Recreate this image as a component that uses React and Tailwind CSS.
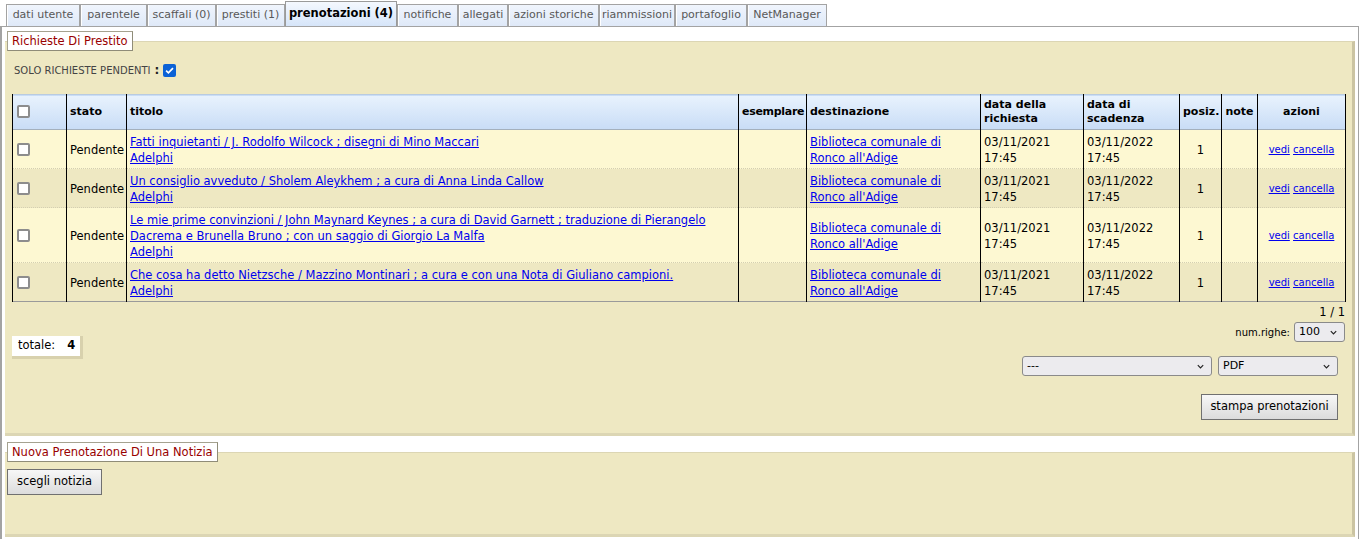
import React from "react";

const tabs = [
  { label: "dati utente", w: "w-[74px]" },
  { label: "parentele", w: "w-[67px]" },
  { label: "scaffali (0)", w: "w-[69px]" },
  { label: "prestiti (1)", w: "w-[69px]" },
  { label: "prenotazioni (4)", w: "w-[112px]", active: true },
  { label: "notifiche", w: "w-[61px]" },
  { label: "allegati", w: "w-[50px]" },
  { label: "azioni storiche", w: "w-[91px]" },
  { label: "riammissioni", w: "w-[76px]" },
  { label: "portafoglio", w: "w-[72px]" },
  { label: "NetManager", w: "w-[80px]" },
];

const rows = [
  {
    titolo: ["Fatti inquietanti / J. Rodolfo Wilcock ; disegni di Mino Maccari"],
  },
  {
    titolo: ["Un consiglio avveduto / Sholem Aleykhem ; a cura di Anna Linda Callow"],
  },
  {
    titolo: [
      "Le mie prime convinzioni / John Maynard Keynes ; a cura di David Garnett ; traduzione di Pierangelo",
      "Dacrema e Brunella Bruno ; con un saggio di Giorgio La Malfa",
    ],
  },
  {
    titolo: ["Che cosa ha detto Nietzsche / Mazzino Montinari ; a cura e con una Nota di Giuliano campioni."],
  },
];

function Box({ checked }) {
  if (checked) {
    return (
      <span className="inline-flex w-[13px] h-[13px] rounded-[2px] bg-[#0b62d6] items-center justify-center">
        <svg viewBox="0 0 12 12" className="w-[11px] h-[11px]">
          <path d="M2.3 6.2 L4.8 8.6 L9.8 3.4" fill="none" stroke="white" strokeWidth="1.8" />
        </svg>
      </span>
    );
  }
  return <span className="inline-block w-[13px] h-[13px] rounded-[2px] border-2 border-[#8d8d8d] bg-white" />;
}

function Chevron() {
  return (
    <svg viewBox="0 0 10 10" className="w-[9px] h-[9px]">
      <path d="M2 3.5 L5 6.5 L8 3.5" fill="none" stroke="#222" strokeWidth="1.3" />
    </svg>
  );
}

function Select({ value, w }) {
  return (
    <div className={`${w} h-[20px] flex items-center justify-between pl-[4px] pr-[6px] border border-[#8a8a8a] rounded-[3px] bg-[#ecebee] text-[11px]`}>
      <span>{value}</span>
      <Chevron />
    </div>
  );
}

function Legend({ children }) {
  return (
    <div className="relative z-10 ml-[2px] inline-block bg-white border border-[#a5a290] border-r-[#8f8c78] border-b-[#8f8c78] px-[4px] h-[20px] leading-[18px] text-[11.5px] text-[#990000]">
      {children}
    </div>
  );
}

const th = "border-x border-black px-[3px] font-bold align-middle";
const td = "border-x border-black px-[3px] align-middle";

export default function App() {
  return (
    <div className="w-[1360px] h-[539px] overflow-hidden bg-white text-black font-['DejaVu_Sans',sans-serif] text-[11px]">
      {/* tabs */}
      <div className="flex items-end pl-[6px] pt-[1px] h-[26px]">
        {tabs.map((t) =>
          t.active ? (
            <div
              key={t.label}
              className={`${t.w} h-[25px] flex items-center justify-center border border-b-0 border-[#9a9a9a] bg-gradient-to-b from-[#f4f8fe] to-[#d6e5f9] font-bold text-[11.5px] text-black`}
            >
              {t.label}
            </div>
          ) : (
            <div
              key={t.label}
              className={`${t.w} h-[22px] flex items-center justify-center border border-b-0 border-[#a3a3a3] bg-gradient-to-b from-[#f0f5fd] to-[#dfe9f8] text-[11px] text-[#585858] shadow-[inset_1px_0_0_#ffffff]`}
            >
              {t.label}
            </div>
          )
        )}
      </div>

      <div className="w-[1359px] h-[513px] border border-b-0 border-[#a3a3a3] border-l-2 pt-[4px] pl-[3px] pr-[3px]">
        {/* Richieste di prestito */}
        <Legend>Richieste Di Prestito</Legend>
        <div className="-mt-[10px] h-[395px] bg-[#eee8c2] border-t border-[#dcd6b4] border-r-[3px] border-r-[#cbc4a2] border-b-[3px] border-b-[#dcd6b4] pl-[7px] pr-[7px] pt-[18px]">
          <div className="flex items-center h-[20px] pl-[2px] text-[10px] text-[#444]">
            <span>SOLO RICHIESTE PENDENTI</span>
            <span className="ml-[4px] mr-[4px] font-bold text-[12px] text-[#222]">:</span>
            <Box checked />
          </div>

          <table className="mt-[14px] w-[1333px] table-fixed border-collapse border-b border-b-[#9a9a9a]">
            <colgroup>
              <col className="w-[54px]" />
              <col className="w-[60px]" />
              <col className="w-[612px]" />
              <col className="w-[68px]" />
              <col className="w-[174px]" />
              <col className="w-[103px]" />
              <col className="w-[96px]" />
              <col className="w-[42px]" />
              <col className="w-[36px]" />
              <col className="w-[88px]" />
            </colgroup>
            <thead>
              <tr className="h-[35px] bg-gradient-to-b from-[#e8f2fd] to-[#c9ddf6] border-t border-[#b9cbe0] border-b border-b-[#a4b0bc] leading-[14px] text-[11px]">
                <th className={`${th} text-left pl-[4px] pt-[3px]`}>
                  <Box />
                </th>
                <th className={`${th} text-left`}>stato</th>
                <th className={`${th} text-left`}>titolo</th>
                <th className={`${th} text-left px-[1px] tracking-[-0.3px]`}>esemplare</th>
                <th className={`${th} text-left`}>destinazione</th>
                <th className={`${th} text-left`}>
                  data della
                  <br />
                  richiesta
                </th>
                <th className={`${th} text-left`}>
                  data di
                  <br />
                  scadenza
                </th>
                <th className={`${th} text-center px-0`}>posiz.</th>
                <th className={`${th} text-center px-0`}>note</th>
                <th className={`${th} text-center`}>azioni</th>
              </tr>
            </thead>
            <tbody className="leading-[16px] text-[11.5px]">
              {rows.map((r, i) => (
                <tr
                  key={i}
                  className={`${i % 2 === 0 ? "bg-[#fdf8d2]" : "bg-[#eee8c2]"} border-t border-dotted border-[#d4cfb2]`}
                >
                  <td className={`${td} pl-[4px] pt-[5px]`}>
                    <Box />
                  </td>
                  <td className={`${td} pt-[2px]`}>Pendente</td>
                  <td className={`${td} pt-[4px] pb-[2px]`}>
                    {r.titolo.map((line) => (
                      <a key={line} className="block whitespace-nowrap text-[#0000ee] underline">
                        {line}
                      </a>
                    ))}
                    <a className="block text-[#0000ee] underline">Adelphi</a>
                  </td>
                  <td className={td}></td>
                  <td className={`${td} pl-[3px] pt-[2px]`}>
                    <a className="text-[#0000ee] underline">
                      Biblioteca comunale di
                      <br />
                      Ronco all'Adige
                    </a>
                  </td>
                  <td className={`${td} pt-[2px]`}>
                    03/11/2021
                    <br />
                    17:45
                  </td>
                  <td className={`${td} pt-[2px]`}>
                    03/11/2022
                    <br />
                    17:45
                  </td>
                  <td className={`${td} text-center pt-[2px]`}>1</td>
                  <td className={td}></td>
                  <td className={`${td} text-center text-[10px] pt-[2px]`}>
                    <a className="text-[#0000ee] underline">vedi</a>{" "}
                    <a className="text-[#0000ee] underline">cancella</a>
                  </td>
                </tr>
              ))}
            </tbody>
          </table>

          <div className="text-right text-[11.5px] leading-[14px] mt-[3px]">1 / 1</div>
          <div className="flex justify-between items-start">
            <div className="mt-[17px] h-[23px] w-[71px] flex items-center gap-[12px] pl-[6px] bg-white border-r-[3px] border-b-[3px] border-[#d8d1ad] text-[11.5px]">
              <span>totale:</span>
              <span className="font-bold">4</span>
            </div>
            <div className="flex items-center gap-[4px] mt-[3px] text-[10px]">
              <span>num.righe:</span>
              <Select value="100" w="w-[51px]" />
            </div>
          </div>
          <div className="flex justify-end gap-[6px] pr-[7px] -mt-[3px]">
            <Select value="---" w="w-[190px]" />
            <Select value="PDF" w="w-[120px]" />
          </div>
          <div className="flex justify-end pr-[7px] mt-[18px]">
            <button className="h-[26px] w-[137px] border border-[#707070] bg-gradient-to-b from-[#f7f7f7] to-[#dcdcdc] text-[11.5px]">
              stampa prenotazioni
            </button>
          </div>
        </div>

        {/* Nuova prenotazione */}
        <div className="mt-[6px]">
          <Legend>Nuova Prenotazione Di Una Notizia</Legend>
        </div>
        <div className="-mt-[10px] h-[85px] bg-[#eee8c2] border-t border-[#dcd6b4] border-r-[3px] border-r-[#cbc4a2] border-b-[3px] border-b-[#dcd6b4] pl-[2px] pt-[16px]">
          <button className="h-[26px] w-[95px] border border-[#707070] bg-gradient-to-b from-[#f7f7f7] to-[#dcdcdc] text-[11.5px]">
            scegli notizia
          </button>
        </div>
      </div>
    </div>
  );
}
